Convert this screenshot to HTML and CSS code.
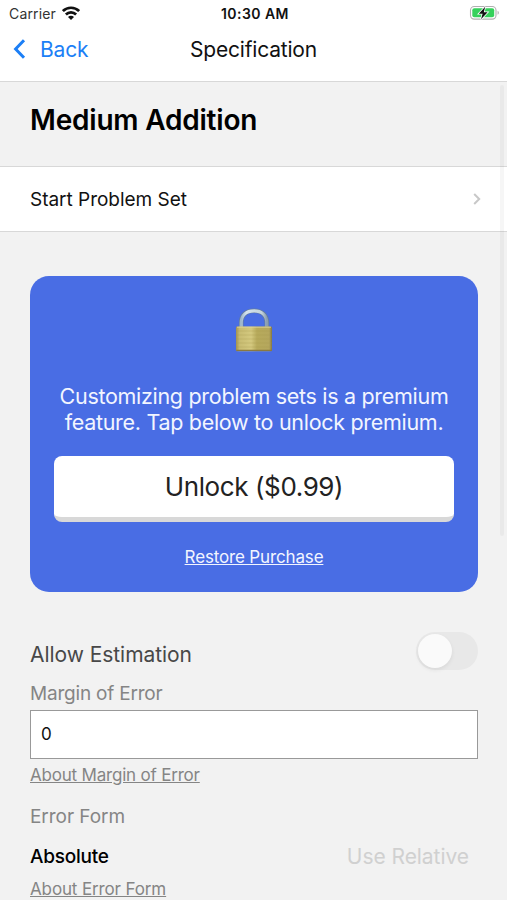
FILE: index.html
```html
<!DOCTYPE html>
<html lang="en">
<head>
<meta charset="utf-8">
<title>Specification</title>
<link rel="stylesheet" href="styles.css">
</head>
<body>
<div class="screen">
  <header class="top">
    <div class="status">
      <div class="carrier"><span class="carrier-name">Carrier</span>
        <svg class="wifi" width="18" height="14" viewBox="0 0 18 14" fill="none" stroke="#111" stroke-width="2.7"><path d="M.9 5.1a11.5 11.5 0 0 1 16.2 0M3.9 8.5a7.2 7.2 0 0 1 10.2 0"/><path d="M9 14 6 10.9a4.2 4.2 0 0 1 6 0Z" fill="#111" stroke="none"/></svg>
      </div>
      <div class="time">10:30 AM</div>
      <svg class="battery" width="32" height="16" viewBox="0 0 32 16"><rect x="1.5" y="1.5" width="25.5" height="12.6" rx="3.8" fill="#fff" stroke="#b0b0b0" stroke-width="1.1"/><rect x="3.3" y="3.3" width="21.9" height="9" rx="2" fill="#35d15b"/><path d="M28.6 5.8c1.6.5 1.6 3.5 0 4Z" fill="#aaa"/><path d="M16.2 1.8 9.8 8.8h3.8l-1.6 5.4 6.6-7h-3.8Z" fill="#111" stroke="#fff" stroke-width="1.6" paint-order="stroke"/></svg>
    </div>
    <nav class="nav">
      <a class="back"><svg width="14" height="20" viewBox="0 0 14 20" fill="none" stroke="#1c7ff6" stroke-width="3"><path d="M12 1.2 3.6 10l8.4 8.8"/></svg><span class="back-label">Back</span></a>
      <h1 class="nav-title">Specification</h1>
    </nav>
  </header>
  <main class="content">
    <h2 class="heading">Medium Addition</h2>
    <a class="start"><span class="start-label">Start Problem Set</span>
      <svg width="8" height="12" viewBox="0 0 8 12" fill="none" stroke="#c8c8c8" stroke-width="2"><path d="m1.2 1 5 5-5 5"/></svg>
    </a>
    <section class="premium">
      <svg class="lock" width="38" height="44" viewBox="0 0 38 44">
        <defs>
          <linearGradient id="brass" x1="0" x2="1"><stop offset="0" stop-color="#a19151"/><stop offset=".1" stop-color="#c8bc72"/><stop offset=".42" stop-color="#d4c97f"/><stop offset=".58" stop-color="#b7aa5b"/><stop offset=".92" stop-color="#b5a75d"/><stop offset="1" stop-color="#837643"/></linearGradient>
          <linearGradient id="steel" x1="0" x2="1"><stop offset="0" stop-color="#9eb6cb"/><stop offset=".2" stop-color="#d5e3ed"/><stop offset=".8" stop-color="#c3d2dc"/><stop offset="1" stop-color="#8a9db0"/></linearGradient>
        </defs>
        <path d="M6.2 20V15C6.2 6.8 11.5 2.8 19 2.8S31.8 6.8 31.8 15V20" fill="none" stroke="#627c9d" stroke-width="4.6"/>
        <path d="M6.2 20V15C6.2 6.8 11.5 2.8 19 2.8S31.8 6.8 31.8 15V20" fill="none" stroke="url(#steel)" stroke-width="3.2"/>
        <rect x="1" y="18.5" width="36" height="24.7" rx="1.2" fill="url(#brass)"/>
        <path d="M2 19.2h34" stroke="#e1d69b" stroke-width=".8"/>
        <path d="M1.5 23h35M1.5 27h35M1.5 31h35M1.5 35h35M1.5 39h35" stroke="#aa9b50" stroke-width=".6" opacity=".5"/>
        <path d="M1.3 42.4h35.4" stroke="#8a7940" stroke-width="1.4"/>
      </svg>
      <p class="pitch">Customizing problem sets is a premium<br>feature. Tap below to unlock premium.</p>
      <button class="unlock">Unlock ($0.99)</button>
      <a class="restore">Restore Purchase</a>
    </section>
    <section class="settings">
      <div class="row"><span class="allow">Allow Estimation</span><span class="switch"><span class="knob"></span></span></div>
      <label class="label margin-label">Margin of Error</label>
      <div class="field">0</div>
      <a class="about about-margin">About Margin of Error</a>
      <div class="label form-label">Error Form</div>
      <div class="row form-row"><span class="absolute">Absolute</span><span class="relative">Use Relative</span></div>
      <a class="about about-form">About Error Form</a>
    </section>
  </main>
  <div class="scrollbar"></div>
</div>
</body>
</html>
```
FILE: styles.css
```css
* { box-sizing: border-box; }
body { margin: 0; background: #f2f2f2; font-family: Inter, "Liberation Sans", sans-serif; color: #111; }
h1, h2, p { margin: 0; font-weight: 400; }
svg { display: block; flex: none; }
.screen { position: relative; width: 507px; height: 900px; overflow: hidden; }
.top { height: 82px; background: #fff; border-bottom: 1px solid #d8d8d8; }
.status { display: grid; grid-template-columns: 1fr auto 1fr; height: 28px; align-items: center; padding: 0 6px 0 9px; }
.carrier { display: flex; align-items: center; gap: 6px; }
.carrier-name { font-size: 14px; line-height: 20px; color: #333; letter-spacing: 0.15px; }
.wifi { margin-top: -2px; }
.time { font-size: 14px; font-weight: 600; line-height: 20px; letter-spacing: 0.45px; }
.battery { justify-self: end; margin-top: -2px; }
.nav { display: grid; grid-template-columns: 1fr auto 1fr; align-items: center; height: 42px; padding: 0 12px; }
.back { display: flex; align-items: center; gap: 14px; color: #1c7ff6; }
.back-label { padding-top: 1px; font-size: 21px; line-height: 28px; letter-spacing: -0.2px; }
.nav-title { padding-top: 1px; font-size: 21px; line-height: 28px; letter-spacing: -0.2px; }
.heading { height: 84px; padding: 20px 30px 0; font-size: 28px; line-height: 36px; font-weight: 600; color: #000; letter-spacing: -0.2px; }
.start { display: flex; align-items: center; justify-content: space-between; height: 66px; padding: 0 26px 0 30px; background: #fff; border: solid #d8d8d8; border-width: 1px 0; }
.start-label { font-size: 19px; letter-spacing: -0.02px; }
.premium { display: flex; flex-direction: column; align-items: center; margin: 44px 29px 0 30px; height: 316px; padding: 32px 24px 0; border-radius: 19px; background: #496de4; color: #f2f5ff; }
.pitch { margin-top: 31px; text-align: center; font-size: 21.5px; line-height: 26px; letter-spacing: -0.3px; white-space: nowrap; }
.unlock { width: 100%; height: 66px; margin-top: 21px; padding: 0; border: 0; border-bottom: 5px solid #d8d8d8; border-radius: 8px; background: #fff; color: #222; font: 400 26px/34px Inter, "Liberation Sans", sans-serif; letter-spacing: -0.4px; }
.restore { margin-top: 23px; font-size: 17px; line-height: 24px; text-decoration: underline; letter-spacing: -0.15px; }
.settings { padding: 40px 29px 0 30px; }
.row { display: flex; align-items: center; justify-content: space-between; }
.allow { padding-top: 7px; font-size: 21px; line-height: 28px; color: #484848; letter-spacing: -0.05px; }
.switch { width: 62px; height: 38px; padding: 2px; border-radius: 19px; background: #e8e8e8; }
.knob { display: block; width: 34px; height: 34px; border-radius: 50%; background: #fafafa; box-shadow: 0 2px 4px rgba(0,0,0,.07); }
.label { display: block; font-size: 19px; line-height: 24px; color: #858585; letter-spacing: -0.2px; }
.margin-label { margin-top: 12px; }
.field { height: 49px; margin-top: 4px; padding-left: 10px; border: 1px solid #999; background: #fff; font-size: 17px; line-height: 47px; }
.about { display: block; width: max-content; font-size: 17px; line-height: 22px; color: #858585; text-decoration: underline; letter-spacing: -0.2px; }
.about-margin { margin-top: 5px; }
.form-label { margin-top: 19px; letter-spacing: -0.05px; }
.form-row { margin-top: 14px; padding-right: 9px; line-height: 28px; }
.absolute { font-size: 19px; font-weight: 500; color: #000; letter-spacing: -0.25px; }
.relative { font-size: 21px; color: #d0d0d0; letter-spacing: -0.05px; }
.about-form { margin-top: 7px; letter-spacing: -0.13px; }
.scrollbar { position: absolute; right: 3px; top: 85px; width: 4px; height: 451px; border-radius: 2px; background: rgba(0,0,0,.035); }
```
